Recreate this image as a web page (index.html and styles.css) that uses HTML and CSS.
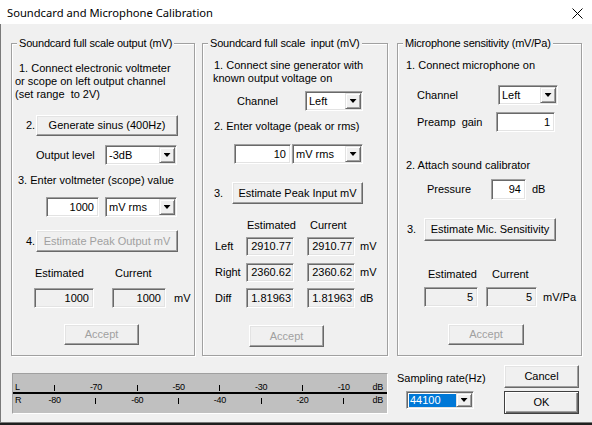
FILE: index.html
```html
<!DOCTYPE html>
<html lang="en">

<head>
    <meta charset="UTF-8">
    <title>Soundcard and Microphone Calibration</title>
    <link rel="stylesheet" href="styles.css">
</head>

<body>
    <div class="window">
        <div class="titlebar">
            <span class="title">Soundcard and Microphone Calibration</span>
            <svg class="close" width="11" height="11" viewBox="0 0 11 11">
                <path d="M0.5 0.5L10.5 10.5M10.5 0.5L0.5 10.5" />
            </svg>
        </div>

        <div class="client">
            <div class="groups">
                <!-- output -->
                <div class="group g-out">
                    <div class="group-title">Soundcard full scale output (mV)</div>
                    <p class="intro">1. Connect electronic voltmeter<br>or scope on left output channel<br>(set range&nbsp; to 2V)</p>
                    <div class="row r-gen">
                        <span class="num">2.</span>
                        <button class="btn">Generate sinus (400Hz)</button>
                    </div>
                    <div class="row r-level">
                        <span class="lbl">Output level</span>
                        <div class="combo"><span class="combo-text">-3dB</span><span class="combo-btn"></span></div>
                    </div>
                    <p class="step">3. Enter voltmeter (scope) value</p>
                    <div class="row r-volt">
                        <div class="edit">1000</div>
                        <div class="combo"><span class="combo-text">mV rms</span><span class="combo-btn"></span></div>
                    </div>
                    <div class="row r-est">
                        <span class="num">4.</span>
                        <button class="btn" disabled>Estimate Peak Output mV</button>
                    </div>
                    <div class="heads"><span>Estimated</span><span>Current</span></div>
                    <div class="row r-vals">
                        <div class="edit ro">1000</div>
                        <div class="edit ro">1000</div>
                        <span class="unit">mV</span>
                    </div>
                    <div class="row r-accept"><button class="btn" disabled>Accept</button></div>
                </div>

                <!-- input -->
                <div class="group g-in">
                    <div class="group-title">Soundcard full scale&nbsp; input (mV)</div>
                    <p class="intro">1. Connect sine generator with<br>known output voltage on</p>
                    <div class="row r-chan">
                        <span class="lbl">Channel</span>
                        <div class="combo"><span class="combo-text">Left</span><span class="combo-btn"></span></div>
                    </div>
                    <p class="step">2. Enter voltage (peak or rms)</p>
                    <div class="row r-volt">
                        <div class="edit">10</div>
                        <div class="combo"><span class="combo-text">mV rms</span><span class="combo-btn"></span></div>
                    </div>
                    <div class="row r-est">
                        <span class="num">3.</span>
                        <button class="btn">Estimate Peak Input mV</button>
                    </div>
                    <div class="heads"><span>Estimated</span><span>Current</span></div>
                    <div class="row r-val r-left">
                        <span class="lbl">Left</span>
                        <div class="edit ro">2910.77</div>
                        <div class="edit ro">2910.77</div>
                        <span class="unit">mV</span>
                    </div>
                    <div class="row r-val r-right">
                        <span class="lbl">Right</span>
                        <div class="edit ro">2360.62</div>
                        <div class="edit ro">2360.62</div>
                        <span class="unit">mV</span>
                    </div>
                    <div class="row r-val r-diff">
                        <span class="lbl">Diff</span>
                        <div class="edit ro">1.81963</div>
                        <div class="edit ro">1.81963</div>
                        <span class="unit">dB</span>
                    </div>
                    <div class="row r-accept"><button class="btn" disabled>Accept</button></div>
                </div>

                <!-- microphone -->
                <div class="group g-mic">
                    <div class="group-title">Microphone sensitivity (mV/Pa)</div>
                    <p class="intro">1. Connect microphone on</p>
                    <div class="row r-chan">
                        <span class="lbl">Channel</span>
                        <div class="combo"><span class="combo-text">Left</span><span class="combo-btn"></span></div>
                    </div>
                    <div class="row r-gain">
                        <span class="lbl">Preamp&nbsp; gain</span>
                        <div class="edit">1</div>
                    </div>
                    <p class="step">2. Attach sound calibrator</p>
                    <div class="row r-press">
                        <span class="lbl">Pressure</span>
                        <div class="edit">94</div>
                        <span class="unit">dB</span>
                    </div>
                    <div class="row r-est">
                        <span class="num">3.</span>
                        <button class="btn">Estimate Mic. Sensitivity</button>
                    </div>
                    <div class="heads"><span>Estimated</span><span>Current</span></div>
                    <div class="row r-vals">
                        <div class="edit ro">5</div>
                        <div class="edit ro">5</div>
                        <span class="unit">mV/Pa</span>
                    </div>
                    <div class="row r-accept"><button class="btn" disabled>Accept</button></div>
                </div>
            </div>

            <div class="bottom">
                <div class="meter">
                    <div class="scale">
                        <span class="ch">L</span><i class="tick"></i><span>-70</span><i class="tick"></i><span>-50</span><i class="tick"></i><span>-30</span><i class="tick"></i><span>-10</span><span class="db">dB</span>
                    </div>
                    <div class="meter-line"></div>
                    <div class="scale">
                        <span class="ch">R</span><span>-80</span><i class="tick"></i><span>-60</span><i class="tick"></i><span>-40</span><i class="tick"></i><span>-20</span><i class="tick"></i><span class="db">dB</span>
                    </div>
                </div>
                <div class="samp">
                    <div>Sampling rate(Hz)</div>
                    <div class="combo"><span class="combo-text"><span class="sel">44100</span></span><span class="combo-btn"></span></div>
                </div>
                <div class="actions">
                    <button class="btn">Cancel</button>
                    <button class="btn default">OK</button>
                </div>
            </div>
        </div>
    </div>
</body>

</html>
```

FILE: styles.css
```css
* {
    box-sizing: border-box;
    margin: 0;
    padding: 0;
}

body {
    width: 592px;
    height: 425px;
    overflow: hidden;
    background: #1f1f1f;
    font-family: "Liberation Sans", Arial, sans-serif;
    font-size: 11px;
    line-height: 13px;
    color: #000;
}

.window {
    width: 592px;
    height: 425px;
}

.titlebar {
    height: 24px;
    background: #fff;
    display: flex;
    align-items: center;
    justify-content: space-between;
    padding: 0 9px 0 7px;
}

.title {
    font-family: "Noto Sans", sans-serif;
    font-size: 11.2px;
}

.close {
    stroke: #000;
    stroke-width: 1;
    margin-top: 2px;
}

.client {
    height: 399px;
    background: #f0f0f0;
    border-left: 1px solid #7a7a7a;
    border-bottom: 1px solid #7a7a7a;
    padding: 19px 0 0 10px;
}

/* group boxes */
.groups {
    display: flex;
    align-items: flex-start;
}

.group {
    height: 313px;
    border: 1px solid #a0a0a0;
    box-shadow: inset 1px 1px 0 #fff, 1px 1px 0 #fff;
}

.g-out {
    width: 184px;
}

.g-in {
    width: 186px;
    margin-left: 7px;
}

.g-mic {
    width: 185px;
    margin-left: 9px;
}

.group-title {
    display: table;
    margin: -7px 0 0 5px;
    padding: 0 2px;
    background: #f0f0f0;
    white-space: nowrap;
    letter-spacing: -0.2px;
}

.row {
    display: flex;
    align-items: center;
}

.row .lbl,
.row .num {
    flex: none;
}

/* controls */
.btn {
    display: flex;
    align-items: center;
    justify-content: center;
    height: 100%;
    font: inherit;
    color: #000;
    background: #f0f0f0;
    border: 1px solid;
    border-color: #fff #696969 #696969 #fff;
    box-shadow: inset -1px -1px 0 #a0a0a0, inset 1px 1px 0 #e3e3e3;
}

.btn:disabled {
    color: #a0a0a0;
}

.btn.default {
    border-color: #404040;
    box-shadow: inset 1px 1px 0 #fff, inset -1px -1px 0 #696969, inset -2px -2px 0 #a0a0a0;
}

.edit,
.combo {
    display: flex;
    align-items: center;
    height: 100%;
    background: #fff;
    border: 1px solid;
    border-color: #a0a0a0 #fff #fff #a0a0a0;
    box-shadow: inset 1px 1px 0 #696969, inset -1px -1px 0 #e3e3e3;
}

.edit {
    justify-content: flex-end;
    padding-right: 4px;
}

.edit.ro {
    background: #f0f0f0;
}

.combo {
    padding: 1px;
}

.combo-text {
    flex: 1;
    padding-left: 2px;
}

.combo-btn {
    width: 16px;
    height: 100%;
    display: flex;
    align-items: center;
    justify-content: center;
    background: #f0f0f0;
    border: 1px solid;
    border-color: #e3e3e3 #696969 #696969 #e3e3e3;
    box-shadow: inset 1px 1px 0 #fff, inset -1px -1px 0 #a0a0a0;
}

.combo-btn::after {
    content: "";
    width: 7px;
    height: 4px;
    background: #000;
    clip-path: polygon(0 0, 100% 0, 50% 100%);
}

.heads {
    display: flex;
}

/* output group */
.g-out .intro {
    margin-top: 12px;
    padding-left: 3px;
    text-indent: 4px;
}

.g-out .r-gen {
    margin-top: 14px;
    height: 21px;
    padding-left: 14px;
}

.g-out .num {
    width: 10px;
}

.g-out .r-gen .btn,
.g-out .r-est .btn {
    width: 142px;
}

.g-out .r-level {
    margin-top: 9px;
    height: 20px;
    padding-left: 24px;
}

.g-out .r-level .lbl {
    width: 69px;
}

.g-out .r-level .combo {
    width: 72px;
}

.g-out .step {
    margin-top: 9px;
    padding-left: 6px;
}

.g-out .r-volt {
    margin-top: 10px;
    height: 20px;
    padding-left: 34px;
}

.g-out .r-volt .edit {
    width: 53px;
}

.g-out .r-volt .combo {
    width: 72px;
    margin-left: 6px;
}

.g-out .r-est {
    margin-top: 13px;
    height: 22px;
    padding-left: 14px;
}

.g-out .heads {
    margin-top: 15px;
    padding-left: 23px;
}

.g-out .heads span:first-child {
    width: 80px;
}

.g-out .r-vals {
    margin-top: 8px;
    height: 20px;
    padding-left: 22px;
}

.g-out .r-vals .edit:first-child {
    width: 60px;
}

.g-out .r-vals .edit + .edit {
    width: 54px;
    margin-left: 18px;
}

.g-out .r-vals .unit {
    margin-left: 8px;
}

.g-out .r-accept {
    margin-top: 16px;
    height: 21px;
    padding-left: 52px;
}

.r-accept .btn {
    width: 75px;
}

/* input group */
.g-in .intro {
    margin-top: 9px;
    padding-left: 10px;
    text-indent: 1px;
}

.g-in .r-chan {
    margin-top: 6px;
    height: 20px;
    padding-left: 34px;
}

.g-in .r-chan .lbl {
    width: 68px;
}

.g-in .r-chan .combo {
    width: 58px;
}

.g-in .step {
    margin-top: 9px;
    padding-left: 11px;
}

.g-in .r-volt {
    margin-top: 11px;
    height: 20px;
    padding-left: 31px;
}

.g-in .r-volt .edit {
    width: 57px;
}

.g-in .r-volt .combo {
    width: 71px;
    margin-left: 1px;
}

.g-in .r-est {
    margin-top: 18px;
    height: 22px;
    padding-left: 11px;
}

.g-in .num {
    width: 18px;
}

.g-in .r-est .btn {
    width: 131px;
}

.g-in .heads {
    margin-top: 15px;
    padding-left: 44px;
}

.g-in .heads span:first-child {
    width: 63px;
}

.g-in .r-val {
    height: 19px;
    padding-left: 12px;
}

.g-in .r-left {
    margin-top: 5px;
}

.g-in .r-right {
    margin-top: 7px;
}

.g-in .r-diff {
    margin-top: 6px;
    height: 20px;
}

.g-in .r-val .lbl {
    width: 31px;
}

.g-in .r-val .edit {
    width: 48px;
    padding-right: 2px;
}

.g-in .r-val .edit + .edit {
    margin-left: 13px;
}

.g-in .r-val .unit {
    margin-left: 5px;
}

.g-in .r-accept {
    margin-top: 17px;
    height: 22px;
    padding-left: 46px;
}

/* microphone group */
.g-mic .intro {
    margin-top: 9px;
    padding-left: 8px;
}

.g-mic .r-chan {
    margin-top: 13px;
    height: 20px;
    padding-left: 19px;
}

.g-mic .r-chan .lbl {
    width: 81px;
}

.g-mic .r-chan .combo {
    width: 60px;
}

.g-mic .r-gain {
    margin-top: 7px;
    height: 20px;
    padding-left: 19px;
}

.g-mic .r-gain .lbl {
    width: 79px;
}

.g-mic .r-gain .edit {
    width: 59px;
}

.g-mic .step {
    margin-top: 27px;
    padding-left: 8px;
}

.g-mic .r-press {
    margin-top: 7px;
    height: 21px;
    padding-left: 29px;
}

.g-mic .r-press .lbl {
    width: 64px;
}

.g-mic .r-press .edit {
    width: 35px;
}

.g-mic .r-press .unit {
    margin-left: 6px;
}

.g-mic .r-est {
    margin-top: 18px;
    height: 23px;
    padding-left: 9px;
}

.g-mic .num {
    width: 17px;
}

.g-mic .r-est .btn {
    width: 132px;
}

.g-mic .heads {
    margin-top: 27px;
    padding-left: 30px;
}

.g-mic .heads span:first-child {
    width: 64px;
}

.g-mic .r-vals {
    margin-top: 6px;
    height: 20px;
    padding-left: 26px;
}

.g-mic .r-vals .edit:first-child {
    width: 54px;
}

.g-mic .r-vals .edit + .edit {
    width: 51px;
    margin-left: 8px;
}

.g-mic .r-vals .unit {
    margin-left: 6px;
}

.g-mic .r-accept {
    margin-top: 17px;
    height: 21px;
    padding-left: 50px;
}

.g-mic .r-accept .btn {
    width: 76px;
}

/* bottom strip */
.bottom {
    display: flex;
    align-items: flex-start;
}

.meter {
    width: 376px;
    height: 41px;
    margin: 17px 0 0 1px;
    padding-top: 7px;
    background: #c0c0c0;
    border: 1px solid;
    border-color: #a0a0a0 #fff #fff #a0a0a0;
    font-size: 9px;
    letter-spacing: -0.3px;
}

.scale {
    display: grid;
    grid-template-columns: 21px repeat(8, 41.3px) 1fr;
    align-items: center;
    justify-items: center;
    height: 11px;
}

.scale + .meter-line + .scale {
    height: 12px;
}

.scale .ch {
    justify-self: start;
    padding-left: 2px;
}

.scale .db {
    justify-self: end;
    padding-right: 4px;
}

.tick {
    width: 1px;
    height: 6px;
    background: #000;
}

.meter-line {
    height: 2px;
    background: #000;
}

.samp {
    width: 107px;
    margin: 16px 0 0 9px;
}

.samp .combo {
    width: 68px;
    height: 18px;
    margin: 6px 0 0 9px;
}

.samp .combo-text {
    height: 100%;
    padding: 1px 0 0 1px;
}

.samp .sel {
    display: block;
    height: 100%;
    background: #0078d7;
    color: #fff;
    padding-left: 1px;
}

.actions {
    width: 75px;
    margin-top: 9px;
}

.actions .btn {
    width: 75px;
    height: 23px;
}

.actions .btn + .btn {
    margin-top: 3px;
}
```
